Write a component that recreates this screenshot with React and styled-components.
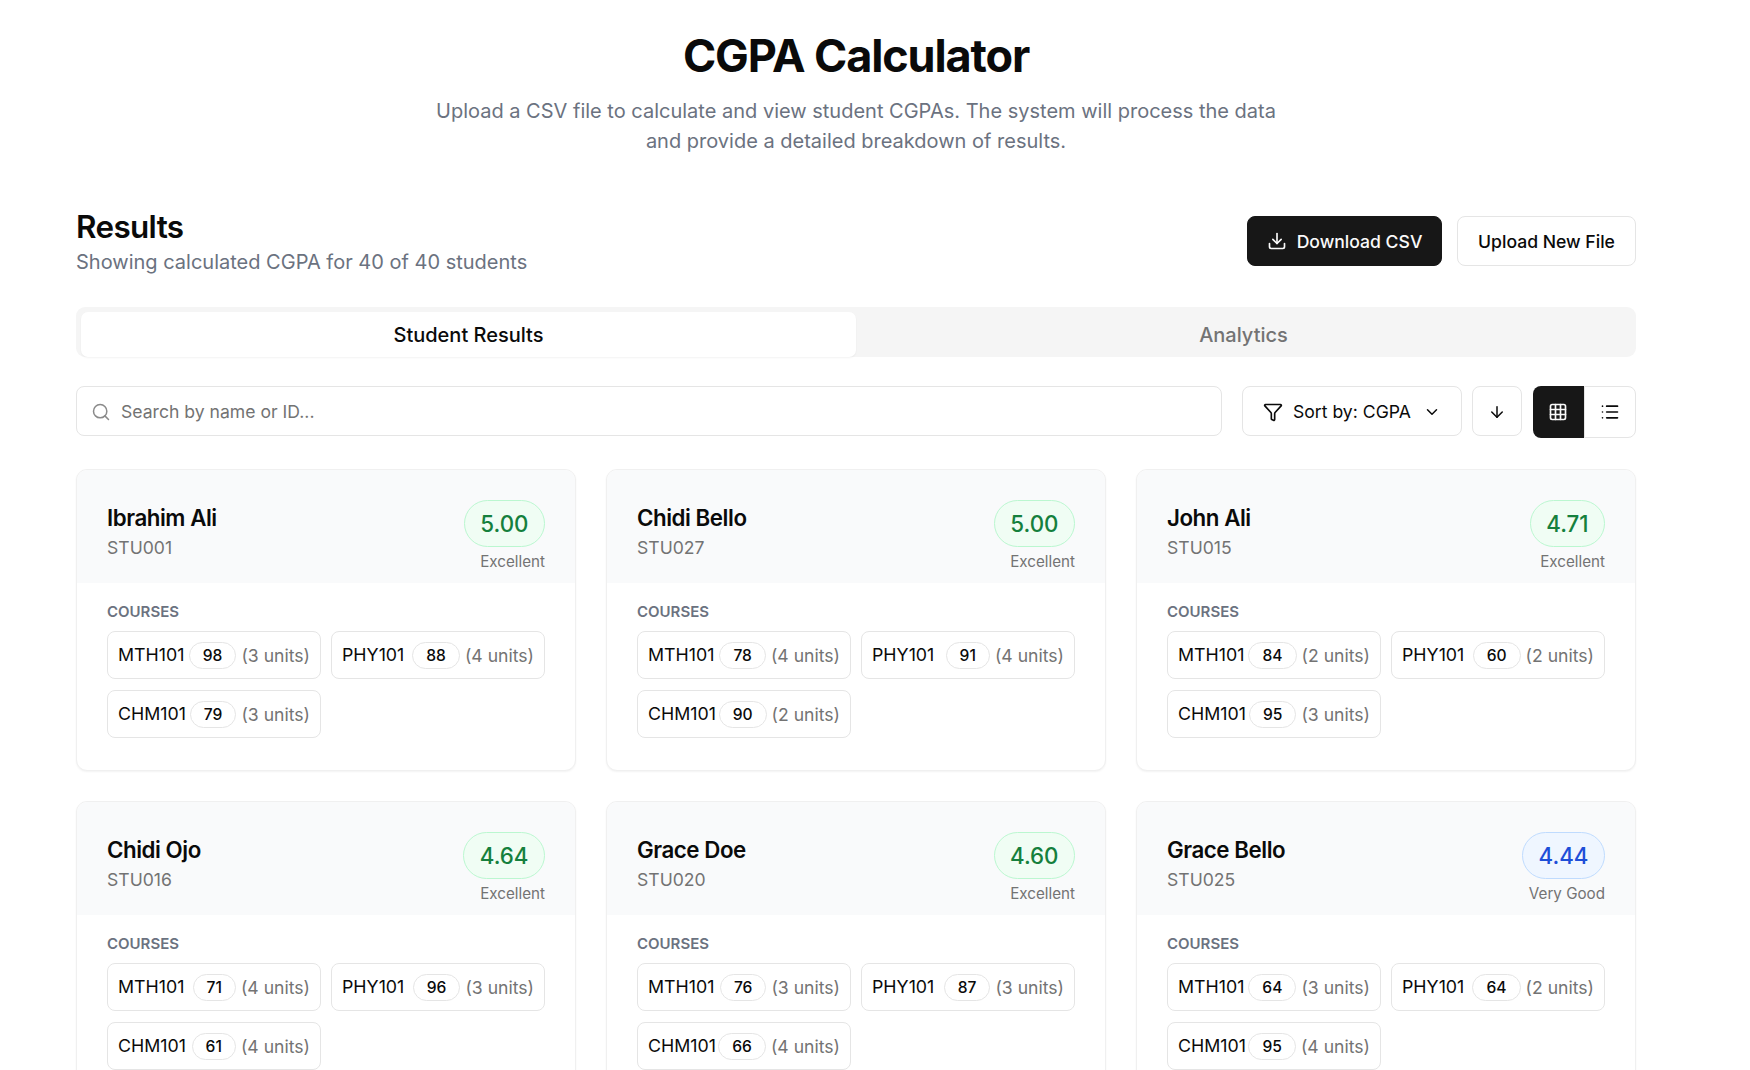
import React from "react";
import styled, { createGlobalStyle } from "styled-components";
import { ArrowDown, ChevronDown, Download, Filter, Grid3x3, List, Search } from "lucide-react";

const students = [
  { name: "Ibrahim Ali", id: "STU001", cgpa: "5.00", label: "Excellent", courses: [["MTH101", 98, 3], ["PHY101", 88, 4], ["CHM101", 79, 3]] },
  { name: "Chidi Bello", id: "STU027", cgpa: "5.00", label: "Excellent", courses: [["MTH101", 78, 4], ["PHY101", 91, 4], ["CHM101", 90, 2]] },
  { name: "John Ali", id: "STU015", cgpa: "4.71", label: "Excellent", courses: [["MTH101", 84, 2], ["PHY101", 60, 2], ["CHM101", 95, 3]] },
  { name: "Chidi Ojo", id: "STU016", cgpa: "4.64", label: "Excellent", courses: [["MTH101", 71, 4], ["PHY101", 96, 3], ["CHM101", 61, 4]] },
  { name: "Grace Doe", id: "STU020", cgpa: "4.60", label: "Excellent", courses: [["MTH101", 76, 3], ["PHY101", 87, 3], ["CHM101", 66, 4]] },
  { name: "Grace Bello", id: "STU025", cgpa: "4.44", label: "Very Good", courses: [["MTH101", 64, 3], ["PHY101", 64, 2], ["CHM101", 95, 4]] },
];

export default function App() {
  return (
    <Page>
      <GlobalStyle />
      <Hero>
        <Title>CGPA Calculator</Title>
        <Subtitle>
          Upload a CSV file to calculate and view student CGPAs. The system will process the data and provide a detailed breakdown of results.
        </Subtitle>
      </Hero>

      <ResultsHeader>
        <div>
          <SectionTitle>Results</SectionTitle>
          <SectionSub>Showing calculated CGPA for 40 of 40 students</SectionSub>
        </div>
        <Actions>
          <ActionButton $primary>
            <Download size={20} strokeWidth={2} />
            Download CSV
          </ActionButton>
          <ActionButton>Upload New File</ActionButton>
        </Actions>
      </ResultsHeader>

      <Tabs>
        <Tab $active>Student Results</Tab>
        <Tab>Analytics</Tab>
      </Tabs>

      <Toolbar>
        <SearchBox>
          <Search size={20} strokeWidth={1.8} />
          <span>Search by name or ID...</span>
        </SearchBox>
        <SortButton>
          <Filter size={20} strokeWidth={2} />
          <span>Sort by: CGPA</span>
          <ChevronDown size={18} strokeWidth={2} />
        </SortButton>
        <DirectionButton>
          <ArrowDown size={18} strokeWidth={2} />
        </DirectionButton>
        <ViewToggle>
          <ViewOption $active>
            <Grid3x3 size={20} strokeWidth={2} />
          </ViewOption>
          <ViewOption>
            <List size={20} strokeWidth={2} />
          </ViewOption>
        </ViewToggle>
      </Toolbar>

      <CardGrid>
        {students.map((s) => (
          <Card key={s.id}>
            <CardHeader>
              <NameBlock>
                <StudentName>{s.name}</StudentName>
                <StudentId>{s.id}</StudentId>
              </NameBlock>
              <Score>
                <ScoreBadge $tone={s.label === "Excellent" ? "green" : "blue"}>{s.cgpa}</ScoreBadge>
                <ScoreLabel>{s.label}</ScoreLabel>
              </Score>
            </CardHeader>
            <CardBody>
              <CoursesLabel>COURSES</CoursesLabel>
              <CourseGrid>
                {s.courses.map(([code, mark, units]) => (
                  <CourseChip key={code}>
                    <CourseCode>{code}</CourseCode>
                    <CourseRight>
                      <Mark>{mark}</Mark>
                      <Units>({units} units)</Units>
                    </CourseRight>
                  </CourseChip>
                ))}
              </CourseGrid>
            </CardBody>
          </Card>
        ))}
      </CardGrid>
    </Page>
  );
}

const GlobalStyle = createGlobalStyle`
  html, body { margin: 0; height: 100%; overflow: hidden; background: #fff; }
  body { font-family: Inter, "Liberation Sans", sans-serif; color: #0a0a0a; }
  * { box-sizing: border-box; }
`;

const Page = styled.div`
  height: 100vh;
  overflow: hidden;
  padding: 28px 114px 0 76px;
`;

const Hero = styled.div`
  display: flex;
  flex-direction: column;
  align-items: center;
  text-align: center;
  margin-bottom: 53px;
`;

const Title = styled.h1`
  margin: 0 0 12px;
  font-size: 45px;
  line-height: 56px;
  font-weight: 700;
  letter-spacing: -0.025em;
`;

const Subtitle = styled.p`
  margin: 0;
  width: 860px;
  font-size: 20px;
  line-height: 30px;
  color: #6b7280;
`;

const ResultsHeader = styled.div`
  display: flex;
  justify-content: space-between;
  align-items: flex-start;
  margin-bottom: 31px;
`;

const SectionTitle = styled.h2`
  margin: 0;
  padding-top: 1px;
  font-size: 31.4px;
  line-height: 34px;
  font-weight: 600;
  letter-spacing: -0.02em;
`;

const SectionSub = styled.p`
  margin: 4px 0 0;
  font-size: 20px;
  line-height: 28px;
  color: #6b7280;
`;

const Actions = styled.div`
  display: flex;
  gap: 15px;
  margin-top: 7px;
`;

const ActionButton = styled.button`
  display: flex;
  align-items: center;
  justify-content: center;
  gap: 10px;
  height: 50px;
  width: ${(p) => (p.$primary ? "195px" : "179px")};
  padding: 0;
  border-radius: 8px;
  font: 500 17.6px Inter, sans-serif;
  border: 1px solid ${(p) => (p.$primary ? "#171717" : "#e5e5e5")};
  background: ${(p) => (p.$primary ? "#171717" : "#fff")};
  color: ${(p) => (p.$primary ? "#fafafa" : "#0a0a0a")};
`;

const Tabs = styled.div`
  display: grid;
  grid-template-columns: 1fr 1fr;
  height: 50px;
  padding: 5px 5px 0;
  background: #f5f5f5;
  border-radius: 9px;
  margin-bottom: 29px;
`;

const Tab = styled.div`
  display: flex;
  align-items: center;
  justify-content: center;
  border-radius: 7px;
  font-size: 20px;
  font-weight: 500;
  color: ${(p) => (p.$active ? "#0a0a0a" : "#737373")};
  background: ${(p) => (p.$active ? "#fff" : "transparent")};
  box-shadow: ${(p) => (p.$active ? "0 1px 2px rgba(0,0,0,0.05)" : "none")};
`;

const Toolbar = styled.div`
  display: flex;
  align-items: flex-start;
  margin-bottom: 31px;
`;

const SearchBox = styled.div`
  flex: 1;
  display: flex;
  align-items: center;
  gap: 10px;
  height: 50px;
  padding: 1px 14px 0;
  border: 1px solid #e5e5e5;
  border-radius: 8px;
  color: #737373;
  font-size: 17.6px;
  margin-right: 20px;
  svg { color: #8a8a8a; }
`;

const SortButton = styled.div`
  display: flex;
  align-items: center;
  width: 220px;
  height: 50px;
  padding: 1px 20px 0;
  gap: 10px;
  border: 1px solid #e5e5e5;
  border-radius: 8px;
  font-size: 17.6px;
  margin-right: 10px;
  span { flex: 1; }
`;

const DirectionButton = styled.div`
  display: flex;
  align-items: center;
  justify-content: center;
  width: 50px;
  height: 50px;
  padding-top: 1px;
  border: 1px solid #e5e5e5;
  border-radius: 8px;
  margin-right: 11px;
`;

const ViewToggle = styled.div`
  display: flex;
  width: 103px;
  height: 52px;
`;

const ViewOption = styled.div`
  flex: 1;
  display: flex;
  align-items: center;
  justify-content: center;
  background: ${(p) => (p.$active ? "#171717" : "#fff")};
  color: ${(p) => (p.$active ? "#fafafa" : "#0a0a0a")};
  border: ${(p) => (p.$active ? "none" : "1px solid #e5e5e5")};
  border-radius: ${(p) => (p.$active ? "8px 0 0 8px" : "0 8px 8px 0")};
`;

const CardGrid = styled.div`
  display: grid;
  grid-template-columns: repeat(3, minmax(0, 1fr));
  gap: 30px;
`;

const Card = styled.div`
  border: 1px solid #f0f0f0;
  border-radius: 11px;
  overflow: hidden;
  box-shadow: 0 1px 2px rgba(0, 0, 0, 0.05);
  background: #fff;
`;

const CardHeader = styled.div`
  display: flex;
  justify-content: space-between;
  align-items: flex-start;
  height: 113px;
  padding: 30px 30px 0;
  background: #f9fafb;
`;

const NameBlock = styled.div`
  padding-top: 3px;
`;

const StudentName = styled.div`
  font-size: 22.3px;
  line-height: 30px;
  font-weight: 600;
  letter-spacing: -0.02em;
`;

const StudentId = styled.div`
  margin-top: 2px;
  font-size: 17.6px;
  line-height: 25px;
  color: #737373;
`;

const Score = styled.div`
  display: flex;
  flex-direction: column;
  align-items: flex-end;
`;

const tones = {
  green: { bg: "#f0fdf4", border: "#bbf7d0", text: "#15803d" },
  blue: { bg: "#eff6ff", border: "#bfdbfe", text: "#1d4ed8" },
};

const ScoreBadge = styled.div`
  padding: 0 15.5px;
  height: 47px;
  line-height: 45px;
  border-radius: 24px;
  font-size: 22.3px;
  font-weight: 500;
  background: ${(p) => tones[p.$tone].bg};
  border: 1px solid ${(p) => tones[p.$tone].border};
  color: ${(p) => tones[p.$tone].text};
`;

const ScoreLabel = styled.div`
  margin-top: 4px;
  font-size: 15.2px;
  line-height: 22px;
  color: #737373;
`;

const CardBody = styled.div`
  padding: 19px 30px 32px;
`;

const CoursesLabel = styled.div`
  font-size: 15px;
  line-height: 20px;
  font-weight: 600;
  color: #6b7280;
  margin-bottom: 9px;
`;

const CourseGrid = styled.div`
  display: grid;
  grid-template-columns: repeat(2, minmax(0, 1fr));
  gap: 11px 10px;
`;

const CourseChip = styled.div`
  display: flex;
  align-items: center;
  justify-content: space-between;
  height: 48px;
  padding: 0 10px;
  border: 1px solid #e5e5e5;
  border-radius: 8px;
`;

const CourseCode = styled.span`
  font-size: 17.8px;
  font-weight: 400;
  margin-top: -2px;
  white-space: nowrap;
`;

const CourseRight = styled.span`
  display: flex;
  align-items: center;
  gap: 5px;
`;

const Mark = styled.span`
  display: flex;
  align-items: center;
  height: 27px;
  padding: 0 13px;
  border: 1px solid #e5e5e5;
  border-radius: 14px;
  font-size: 15.6px;
  font-weight: 500;
`;

const Units = styled.span`
  font-size: 17.6px;
  color: #737373;
  white-space: nowrap;
`;
